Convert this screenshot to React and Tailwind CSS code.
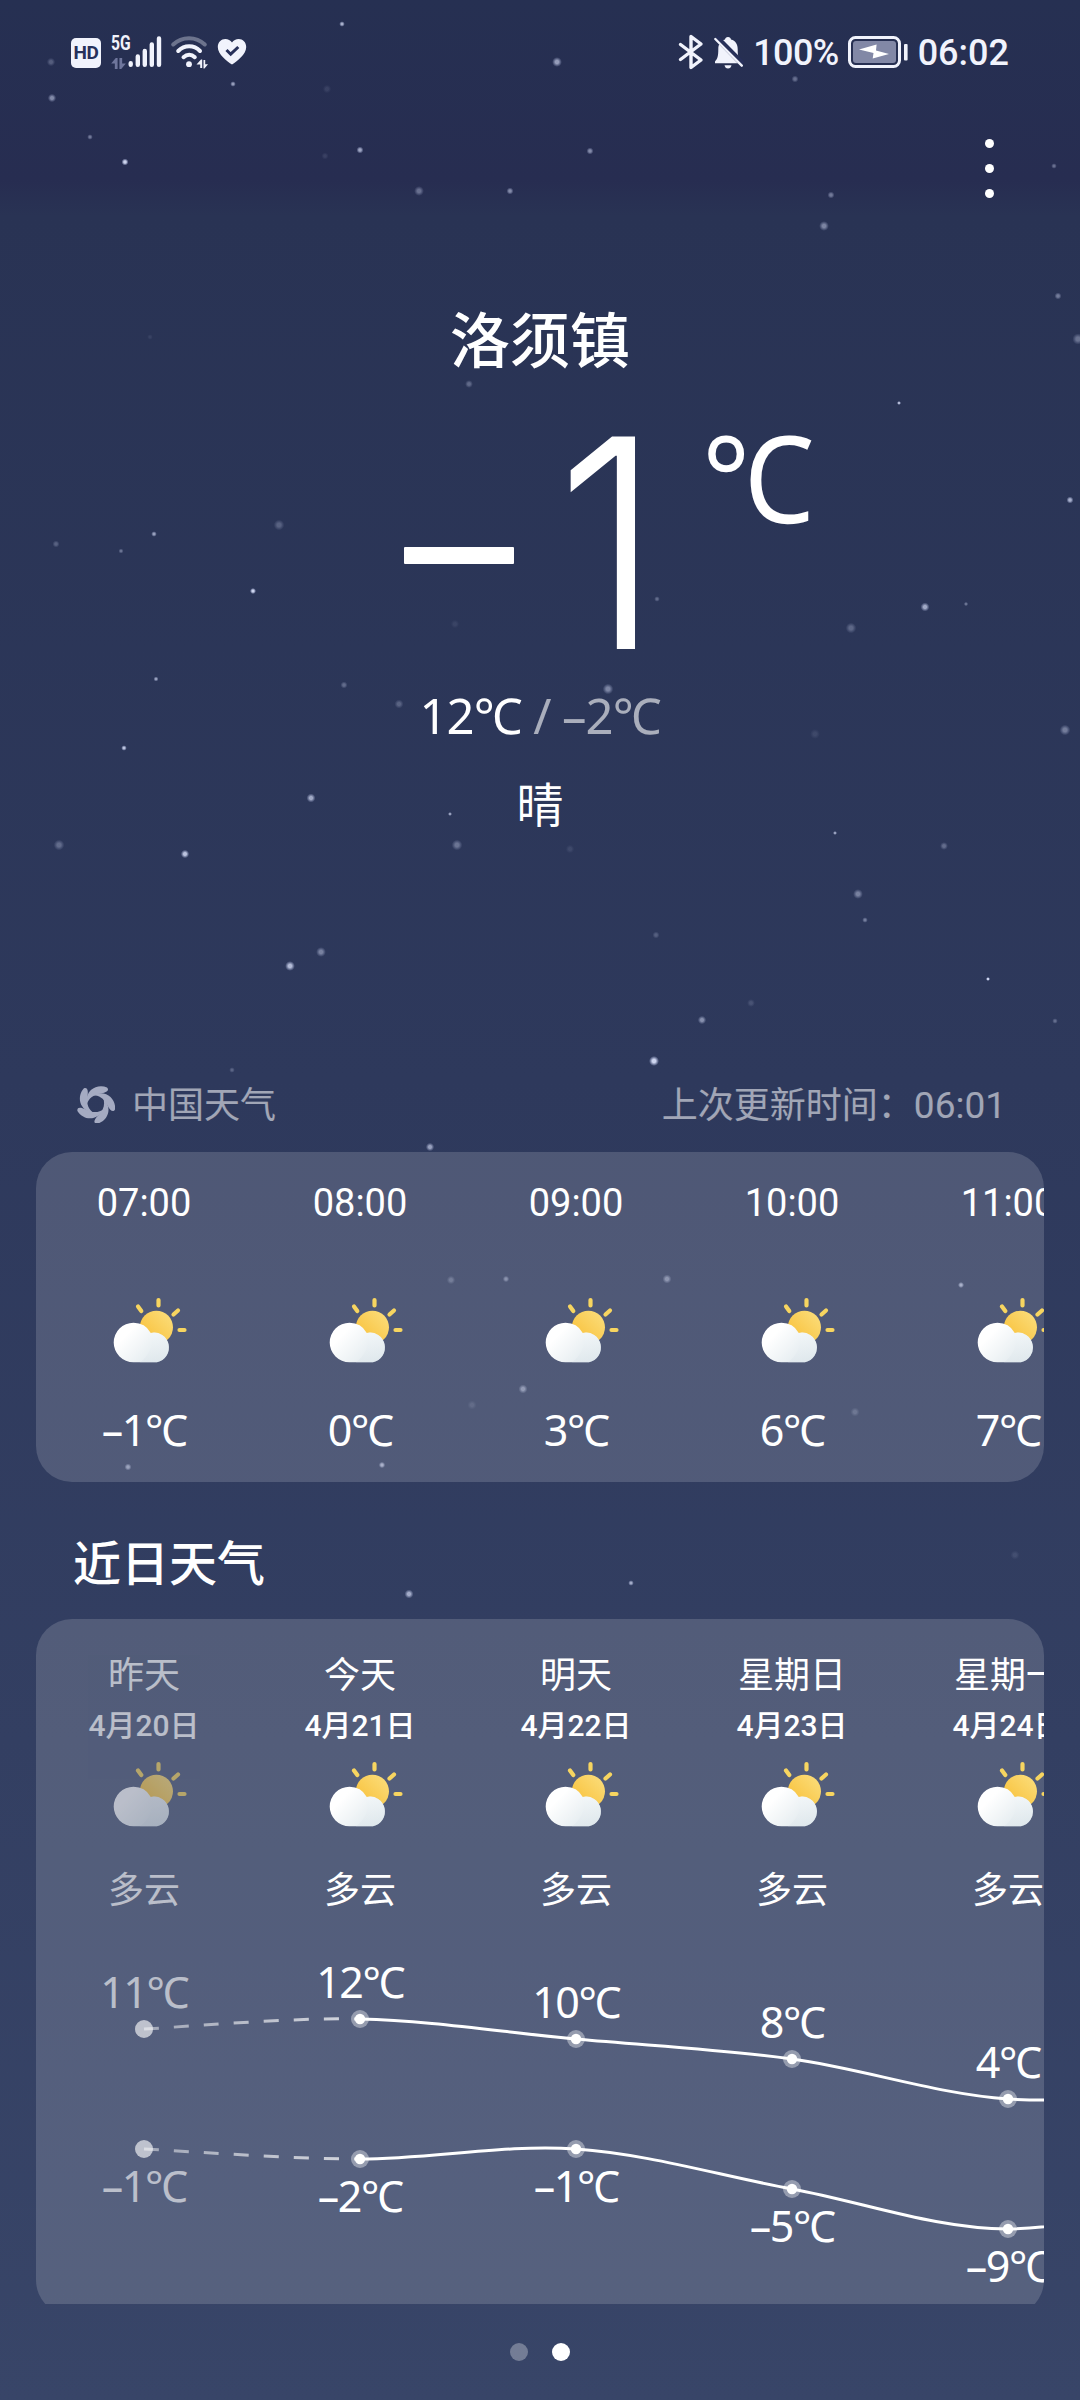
const FONT = "font-['Roboto','Noto_Sans_CJK_SC',sans-serif]";

// [x, y, radius, opacity]
const STARS = [
  [342, 24, 2, 0.7], [557, 62, 3.5, 0.6], [51, 62, 3, 0.25], [52, 98, 3, 0.5], [233, 84, 2, 0.6],
  [90, 137, 2, 0.4], [125, 162, 2.5, 0.9], [327, 89, 3, 0.1], [360, 150, 2.5, 0.65], [325, 156, 2.5, 0.1],
  [590, 151, 2.5, 0.5], [419, 191, 3.5, 0.35], [510, 191, 2.5, 0.5], [795, 79, 2.5, 0.35], [831, 195, 2.5, 0.4],
  [824, 226, 3.5, 0.45], [1054, 166, 2, 0.35], [1058, 296, 2.5, 0.4], [1078, 339, 4, 0.35], [469, 384, 2.8, 0.3],
  [899, 403, 1.5, 0.75], [1070, 500, 2.5, 0.7], [279, 525, 3.8, 0.25], [154, 534, 2, 0.6], [56, 544, 2.5, 0.25],
  [121, 551, 1.8, 0.35], [253, 591, 2.2, 0.9], [925, 607, 3.2, 0.65], [966, 604, 1.6, 0.35], [851, 628, 3.8, 0.28],
  [657, 599, 2, 0.3], [455, 624, 3, 0.08], [608, 689, 3.8, 0.45], [344, 685, 2.5, 0.3], [399, 704, 3.2, 0.25],
  [156, 679, 1.8, 0.6], [1065, 730, 3.8, 0.4], [815, 734, 3.5, 0.1], [124, 748, 2, 0.8], [311, 798, 3.2, 0.65],
  [450, 814, 1.5, 0.6], [457, 845, 3.8, 0.35], [570, 849, 3, 0.1], [59, 845, 3.8, 0.3], [185, 854, 3, 0.8],
  [835, 833, 1.5, 0.6], [944, 846, 2.8, 0.3], [858, 894, 3.5, 0.42], [865, 920, 2, 0.4], [656, 935, 2.5, 0.22],
  [321, 952, 3.5, 0.42], [290, 966, 3.5, 0.75], [988, 979, 1.5, 0.9], [751, 1003, 2.8, 0.15], [702, 1020, 3, 0.5],
  [1055, 1021, 2, 0.3], [654, 1061, 3.6, 0.9], [232, 1070, 2, 0.25], [150, 337, 2, 0.08], [430, 1147, 3, 0.6],
  [451, 1280, 3, 0.25], [506, 1279, 2.3, 0.4], [667, 1279, 3.2, 0.42], [961, 1285, 2.2, 0.6], [523, 1389, 3.2, 0.45],
  [472, 1405, 3.2, 0.12], [855, 1412, 3.2, 0.2], [128, 1467, 2.5, 0.5], [382, 1465, 2.3, 0.6], [409, 1594, 3.2, 0.65],
  [631, 1583, 2, 0.65], [1015, 1555, 3.2, 0.1],
];

const HOURS = [
  { time: '07:00', temp: '–1' },
  { time: '08:00', temp: '0' },
  { time: '09:00', temp: '3' },
  { time: '10:00', temp: '6' },
  { time: '11:00', temp: '7' },
];

const DAYS = [
  { day: '昨天', date: ['4', '20'], high: 11, low: -1, past: true },
  { day: '今天', date: ['4', '21'], high: 12, low: -2 },
  { day: '明天', date: ['4', '22'], high: 10, low: -1 },
  { day: '星期日', date: ['4', '23'], high: 8, low: -5 },
  { day: '星期一', date: ['4', '24'], high: 4, low: -9 },
  { day: '星期二', date: ['4', '25'], high: 5, low: -5 },
];

function Starfield() {
  return (
    <svg className="pointer-events-none absolute inset-0 h-full w-full" viewBox="0 0 1080 2400">
      <defs>
        <radialGradient id="star">
          <stop offset="0.35" stopColor="#dfe6ff" />
          <stop offset="1" stopColor="#c3cdf5" stopOpacity="0" />
        </radialGradient>
      </defs>
      {STARS.map(([x, y, r, o]) => (
        <circle key={`${x}-${y}`} cx={x} cy={y} r={r * 1.4} fill="url(#star)" opacity={o} />
      ))}
    </svg>
  );
}

function SignalIcon() {
  return (
    <svg className="h-[36px] w-[36px]" viewBox="0 0 36 36" fill="none" stroke="#f1f3fc" strokeWidth="4.4" strokeLinecap="round">
      <path d="M4.7 29.2v1.6M11.8 22.5v8.3M18.8 17v13.8M25.8 10.5v20.3M33 4.5v26.3" />
    </svg>
  );
}

function DataArrows({ className }) {
  return (
    <svg className={className} viewBox="0 0 16 12" fill="currentColor">
      <path d="M0 6 5 0h2v12H4V6zM16 6l-5 6H9V0h3v6z" />
    </svg>
  );
}

function WifiIcon() {
  return (
    <svg className="h-[36px] w-[40px]" viewBox="0 0 40 36" fill="none" stroke="#f1f3fc" strokeWidth="4" strokeLinecap="round">
      <path d="M3.2 10.5C12 2 26 2 34.8 10.5" opacity="0.35" />
      <path d="M8.2 17C14.5 10.8 24 10.8 30 17" />
      <path d="M13.5 23.2C17 20 21.5 20 24.8 23.2" />
      <circle cx="19" cy="30.2" r="2.9" fill="#f1f3fc" stroke="none" />
      <path d="M26.5 30.5 31 25.5h1.2v8.5h-2v-3.5zM38 30.3 34.5 34.5h-1V26h1.7v4.3z" fill="#f1f3fc" stroke="none" />
    </svg>
  );
}

function HeartCheckIcon() {
  return (
    <svg className="h-[28px] w-[30px]" viewBox="0 0 30 28">
      <path d="M15 26.5C10 23 .8 16.5.8 8.9.8 4.2 4.3 1 8.3 1c2.8 0 5.2 1.3 6.7 3.4C16.5 2.3 18.9 1 21.7 1c4 0 7.5 3.2 7.5 7.9 0 7.6-9.2 14.1-14.2 17.6Z" fill="#f1f3fc" />
      <path d="m9.5 12 4.2 4.2 7.6-7.2" fill="none" stroke="#27305a" strokeWidth="3" />
    </svg>
  );
}

function BluetoothIcon() {
  return (
    <svg className="h-[36px] w-[26px]" viewBox="0 0 26 36" fill="none" stroke="#f1f3fc" strokeWidth="3.4" strokeLinejoin="round" strokeLinecap="round">
      <path d="M2.5 10.5 23 26 13 33.5V2.5l10 7.5L2.5 25.5" />
    </svg>
  );
}

function BellOffIcon() {
  return (
    <svg className="h-[36px] w-[32px]" viewBox="0 0 32 36">
      <path d="M16 3c1.7 0 2.8 1 3 2.4 4.5 1.3 6.7 4.8 6.7 9.6 0 6.5.6 9.5 3.3 12.5v1.8H3v-1.8C5.8 24.5 6.3 21.5 6.3 15c0-4.8 2.2-8.3 6.7-9.6C13.2 4 14.3 3 16 3Z" fill="#f1f3fc" />
      <path d="M12.5 31.2h7c-.4 2-1.6 3.3-3.5 3.3s-3.1-1.3-3.5-3.3Z" fill="#f1f3fc" />
      <path d="M4.5 3.5 30.5 30" stroke="#27305a" strokeWidth="6" />
      <path d="M3.3 5 29.8 31.7" stroke="#f1f3fc" strokeWidth="2.4" strokeLinecap="round" />
    </svg>
  );
}

function BatteryIcon() {
  return (
    <svg className="h-[34px] w-[62px]" viewBox="0 0 62 34">
      <rect x="2.5" y="2.5" width="50" height="29" rx="6" fill="none" stroke="#f1f3fc" strokeWidth="3" />
      <rect x="6" y="6" width="43" height="22" rx="3" fill="#8288a6" />
      <path d="M12 14.5 26.5 18l-.8 5.5L42 19l-13-3.500.6-6Z" fill="#fff" />
      <rect x="57" y="9" width="3.6" height="16.5" rx="1" fill="#f1f3fc" />
    </svg>
  );
}

function StatusBar() {
  return (
    <div className="flex h-[104px] items-center justify-between pr-[71px] pl-[71px] text-[#f1f3fc]">
      <div className="flex items-center">
        <div className="mt-[2px] flex h-[30px] w-[30px] items-center justify-center rounded-[5px] bg-[#f1f3fc] text-[19px] font-bold tracking-[-0.5px] text-[#27305a]">
          HD
        </div>
        <div className="ml-[10px] flex h-[34px] w-[18px] flex-col justify-between">
          <span className="origin-left scale-x-[0.78] text-[20px] leading-[17px] font-bold">5G</span>
          <DataArrows className="h-[11px] w-[15px] text-[#6f769c]" />
        </div>
        <div className="-ml-[3px]"><SignalIcon /></div>
        <div className="ml-[8px]"><WifiIcon /></div>
        <div className="ml-[7px]"><HeartCheckIcon /></div>
      </div>
      <div className="flex items-center text-[36px] leading-none font-medium">
        <BluetoothIcon />
        <div className="ml-[8px]"><BellOffIcon /></div>
        <span className="ml-[9px] pt-[1px] tracking-[-0.6px]">100%</span>
        <div className="ml-[8px]"><BatteryIcon /></div>
        <span className="ml-[9px] pt-[1px]">06:02</span>
      </div>
    </div>
  );
}

function SwirlLogo() {
  const blades = [0, 72, 144, 216, 288];
  return (
    <svg className="h-[38px] w-[38px] text-[#a5abc2]" viewBox="-19 -19 38 38" fill="currentColor">
      {blades.map((a) => (
        <path
          key={a}
          transform={`rotate(${a})`}
          d="M11-16.5C2-20.500-11.500-15-9.500 1-7.500-5.500-3-9.300 5-10.500 11.500-11.500 13.500-14 11-16.5Z"
        />
      ))}
    </svg>
  );
}

function PartlyCloudyIcon({ id }) {
  return (
    <svg className="h-[80px] w-[96px] shrink-0" viewBox="0 0 96 80">
      <defs>
        <linearGradient id={`sun${id}`} x1="0" y1="1" x2="1" y2="0">
          <stop offset="0.2" stopColor="#f9c440" />
          <stop offset="1" stopColor="#fbdf80" />
        </linearGradient>
        <linearGradient id={`cloud${id}`} x1="0" y1="0.2" x2="1" y2="0.9">
          <stop offset="0.2" stopColor="#ffffff" />
          <stop offset="1" stopColor="#dbe5ea" />
        </linearGradient>
        <linearGradient id={`puff${id}`} x1="0.6" y1="0" x2="0.3" y2="1">
          <stop offset="0" stopColor="#f4f8fa" />
          <stop offset="1" stopColor="#dde6eb" />
        </linearGradient>
      </defs>
      <g stroke="#f7d560" strokeWidth="4.2" strokeLinecap="round">
        <path d="M42 16.5 45.3 21M62.5 10v5.5M82 20.5 77.5 24.5M83.5 40h5" />
      </g>
      <circle cx="60.4" cy="37.3" r="16.6" fill={`url(#sun${id})`} />
      <path d="M37.5 32.7a19.8 19.8 0 0 1 17.3 10.2A14.8 14.8 0 1 1 61 72.3H37.5a19.8 19.8 0 0 1 0-39.6Z" fill={`url(#cloud${id})`} />
      <path d="M54.8 42.9A14.8 14.8 0 1 1 61 72.3H44C53 66 58 55 54.8 42.9Z" fill={`url(#puff${id})`} opacity="0.5" />
    </svg>
  );
}

function HourlyCard() {
  return (
    <section className="mx-[36px] flex h-[330px] overflow-hidden rounded-[36px] bg-white/[0.155]">
      {HOURS.map((h) => (
        <div key={h.time} className="flex w-[216px] shrink-0 flex-col items-center pt-[21px]">
          <div className="flex h-[60px] items-center text-[38px]">{h.time}</div>
          <div className="mt-[57px] h-[80px]"><PartlyCloudyIcon id={`h${h.time.slice(0, 2)}`} /></div>
          <div className="mt-[30px] flex h-[60px] items-center font-['Noto_Sans','Noto_Sans_CJK_SC',sans-serif] text-[43px] tracking-[-1.5px] whitespace-nowrap">{h.temp}℃</div>
        </div>
      ))}
    </section>
  );
}

// Catmull-Rom segment i → i+1 as a cubic Bézier
function segment(pts, i) {
  const p0 = pts[i - 1] ?? pts[i];
  const [p1, p2] = [pts[i], pts[i + 1]];
  const p3 = pts[i + 2] ?? p2;
  const c = (a, b, s) => `${a[0] + (s * b[0]) / 6} ${a[1] + (s * b[1]) / 6}`;
  const t1 = [p2[0] - p0[0], p2[1] - p0[1]];
  const t2 = [p3[0] - p1[0], p3[1] - p1[1]];
  return `M${p1[0]} ${p1[1]}C${c(p1, t1, 1)} ${c(p2, t2, -1)} ${p2[0]} ${p2[1]}`;
}

function TrendLine({ pts, id }) {
  return (
    <g fill="none" stroke="#fff" strokeWidth="3">
      <defs>
        <linearGradient id={id} gradientUnits="userSpaceOnUse" x1="108" y1="0" x2="324" y2="0">
          <stop offset="0" stopColor="#fff" stopOpacity="0.45" />
          <stop offset="1" stopColor="#fff" stopOpacity="0.75" />
        </linearGradient>
      </defs>
      <path d={segment(pts, 0)} stroke={`url(#${id})`} strokeDasharray="15 15" />
      {pts.slice(1, -1).map((p, i) => <path key={p[0]} d={segment(pts, i + 1)} />)}
      {pts.map((p, i) => (
        <g key={p[0]} stroke="none" fill="#fff">
          <circle cx={p[0]} cy={p[1]} r="9" opacity={i === 0 ? 0.62 : 0.38} />
          {i > 0 && <circle cx={p[0]} cy={p[1]} r="5.2" />}
        </g>
      ))}
    </g>
  );
}

function TrendChart() {
  const x = (i) => 108 + i * 216;
  const high = DAYS.map((d, i) => [x(i), 103 + (12 - d.high) * 10]);
  const low = DAYS.map((d, i) => [x(i), 233 + (-1 - d.low) * 10]);
  const label = (t) => `${t < 0 ? '–' : ''}${Math.abs(t)}℃`;
  return (
    <svg className="block h-[400px] w-[1008px]" viewBox="0 0 1008 400">
      <TrendLine pts={high} id="fadeHigh" />
      <TrendLine pts={low} id="fadeLow" />
      <g className="font-['Noto_Sans','Noto_Sans_CJK_SC',sans-serif] tracking-[-1.5px]" fill="#fff" fontSize="43" textAnchor="middle">
        {DAYS.slice(0, 5).map((d, i) => (
          <g key={d.day} opacity={d.past ? 0.6 : 1}>
            <text x={high[i][0]} y={high[i][1] - 21}>{label(d.high)}</text>
            <text x={low[i][0]} y={low[i][1] + 53}>{label(d.low)}</text>
          </g>
        ))}
      </g>
    </svg>
  );
}

function DailyCard() {
  return (
    <section className="mx-[36px] h-[685px] overflow-hidden">
      <div className="h-[697px] overflow-hidden rounded-[36px] bg-white/[0.155]">
        <div className="flex pt-[32px]">
          {DAYS.slice(0, 5).map((d) => (
            <div key={d.day} className={`flex w-[216px] shrink-0 flex-col items-center ${d.past ? 'opacity-60' : ''}`}>
              <div className="flex h-[50px] items-center text-[36px]">{d.day}</div>
              <div className="mt-[4px] flex h-[40px] items-center text-[30px] font-medium">
                {d.date[0]}月{d.date[1]}日
              </div>
              <div className="mt-[9px] h-[80px]"><PartlyCloudyIcon id={`d${d.date[1]}`} /></div>
              <div className="mt-[32px] flex h-[50px] items-center text-[36px]">多云</div>
            </div>
          ))}
        </div>
        <TrendChart />
      </div>
    </section>
  );
}

export default function App() {
  return (
    <div className={`relative h-[2400px] w-[1080px] overflow-hidden bg-[linear-gradient(180deg,#263052_0%,#272d51_7.5%,#293354_9%,#2e395c_45%,#384568_100%)] text-white ${FONT}`}>
      <Starfield />
      <div className="relative flex flex-col">
        <StatusBar />
        <div className="flex h-[128px] items-center justify-end pr-[86px]">
          <button className="flex flex-col gap-[16px]" aria-label="更多">
            <span className="h-[9px] w-[9px] rounded-full bg-white" />
            <span className="h-[9px] w-[9px] rounded-full bg-white" />
            <span className="h-[9px] w-[9px] rounded-full bg-white" />
          </button>
        </div>
        <h1 className="mt-[71px] flex h-[80px] items-center justify-center text-[60px] leading-[80px] font-medium">洛须镇</h1>
        <div className="-mt-[3px] flex h-[300px] items-start pl-[404px]">
          <span className="mt-[167px] h-[17px] w-[110px] rounded-[1px] bg-white" />
          <span className="mt-[23px] ml-[42px] origin-left scale-x-[0.91] font-['Inter'] text-[292px] leading-[280px] font-light">1</span>
          <span className="-mt-[4px] ml-[31px] inline-block origin-left scale-x-[0.93] font-['Noto_Sans','Noto_Sans_CJK_SC',sans-serif] text-[121px] leading-[200px]">℃</span>
        </div>
        <div className="flex h-[72px] items-center justify-center font-['Noto_Sans','Noto_Sans_CJK_SC',sans-serif] text-[49px] tracking-[-1px] whitespace-pre">
          12℃<span className="text-white/60"> / –2℃</span>
        </div>
        <div className="mt-[18px] flex h-[72px] items-center justify-center text-[47px]">晴</div>
        <div className="mt-[236px] mb-[18px] flex h-[56px] items-center justify-between pr-[74px] pl-[77px] text-[36px] text-white/55">
          <div className="flex items-center gap-[17px]">
            <div className="-mt-[5px]"><SwirlLogo /></div>
            <span>中国天气</span>
          </div>
          <div className="flex items-center">
            上次更新时间：<span className="text-[37px]">06:01</span>
          </div>
        </div>
        <HourlyCard />
        <h2 className="flex h-[137px] items-start pt-[47px] pl-[73px] text-[48px] leading-[72px] font-medium">近日天气</h2>
        <DailyCard />
        <div className="flex h-[96px] items-center justify-center gap-[24px]">
          <span className="h-[18px] w-[18px] rounded-full bg-white/30" />
          <span className="h-[18px] w-[18px] rounded-full bg-white" />
        </div>
      </div>
    </div>
  );
}
